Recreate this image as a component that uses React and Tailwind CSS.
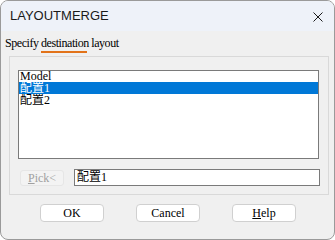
export default function App() {
  const serif = { fontFamily: '"Liberation Serif", "Noto Sans CJK TC", serif' };
  return (
    <div className="w-[335px] h-[240px] bg-white">
      <div className="w-[335px] h-[240px] rounded-[8px] border border-[#9a9a9a] bg-[#f0f0f0] overflow-hidden flex flex-col">
        <div className="h-[30px] bg-[#eef2f9] flex items-center justify-between pl-[9px] pr-[11px] shrink-0">
          <span className="text-[13px] text-[#1a1a1a]" style={{ fontFamily: '"Liberation Sans", sans-serif' }}>LAYOUTMERGE</span>
          <svg width="10" height="10" viewBox="0 0 10 10" className="mt-[1px]">
            <path d="M0.5 0.5 L9.5 9.5 M9.5 0.5 L0.5 9.5" stroke="#1a1a1a" strokeWidth="1" fill="none" />
          </svg>
        </div>
        <div className="h-[25px] relative shrink-0" style={serif}>
          <span className="absolute left-[4px] top-[5px] text-[12px] tracking-[-0.45px] text-black leading-[14px]">Specify destination layout</span>
          <div className="absolute left-[40px] top-[20px] w-[46px] h-[2px] bg-[#e2731a]" />
        </div>
        <div className="ml-[8px] w-[320px] h-[139px] border border-[#d9d9d9] pt-[13px] pl-[8px] flex flex-col" style={serif}>
          <div className="w-[301px] h-[89px] border border-[#7a7a7a] bg-white text-[12px] leading-[12px] text-black">
            <div className="h-[11px] pl-[1px] overflow-hidden leading-[11px]">Model</div>
            <div className="h-[12px] pl-[1px] overflow-hidden bg-[#0078d7] text-white">配置1</div>
            <div className="h-[12px] pl-[1px] overflow-hidden">配置2</div>
          </div>
          <div className="flex items-center mt-[10px] gap-[10px]">
            <div className="w-[44px] h-[16px] ml-[2px] rounded-[3px] border border-[#e6e6e6] bg-[#f3f3f3] text-[#a0a0a0] text-[12px] flex items-center justify-center">
              <span><span className="underline">P</span>ick&lt;</span>
            </div>
            <div className="w-[246px] h-[17px] border border-[#7a7a7a] bg-white text-[12px] leading-[15px] pl-[2px] text-black">配置1</div>
          </div>
        </div>
        <div className="flex mt-[9px]" style={serif}>
          <div className="ml-[39px] w-[64px] h-[18px] rounded-[4px] border border-[#d0d0d0] bg-white text-[12px] flex items-center justify-center text-black">OK</div>
          <div className="ml-[32px] w-[64px] h-[18px] rounded-[4px] border border-[#d0d0d0] bg-white text-[12px] flex items-center justify-center text-black">Cancel</div>
          <div className="ml-[32px] w-[64px] h-[18px] rounded-[4px] border border-[#d0d0d0] bg-white text-[12px] flex items-center justify-center text-black"><span><span className="underline">H</span>elp</span></div>
        </div>
      </div>
    </div>
  );
}
